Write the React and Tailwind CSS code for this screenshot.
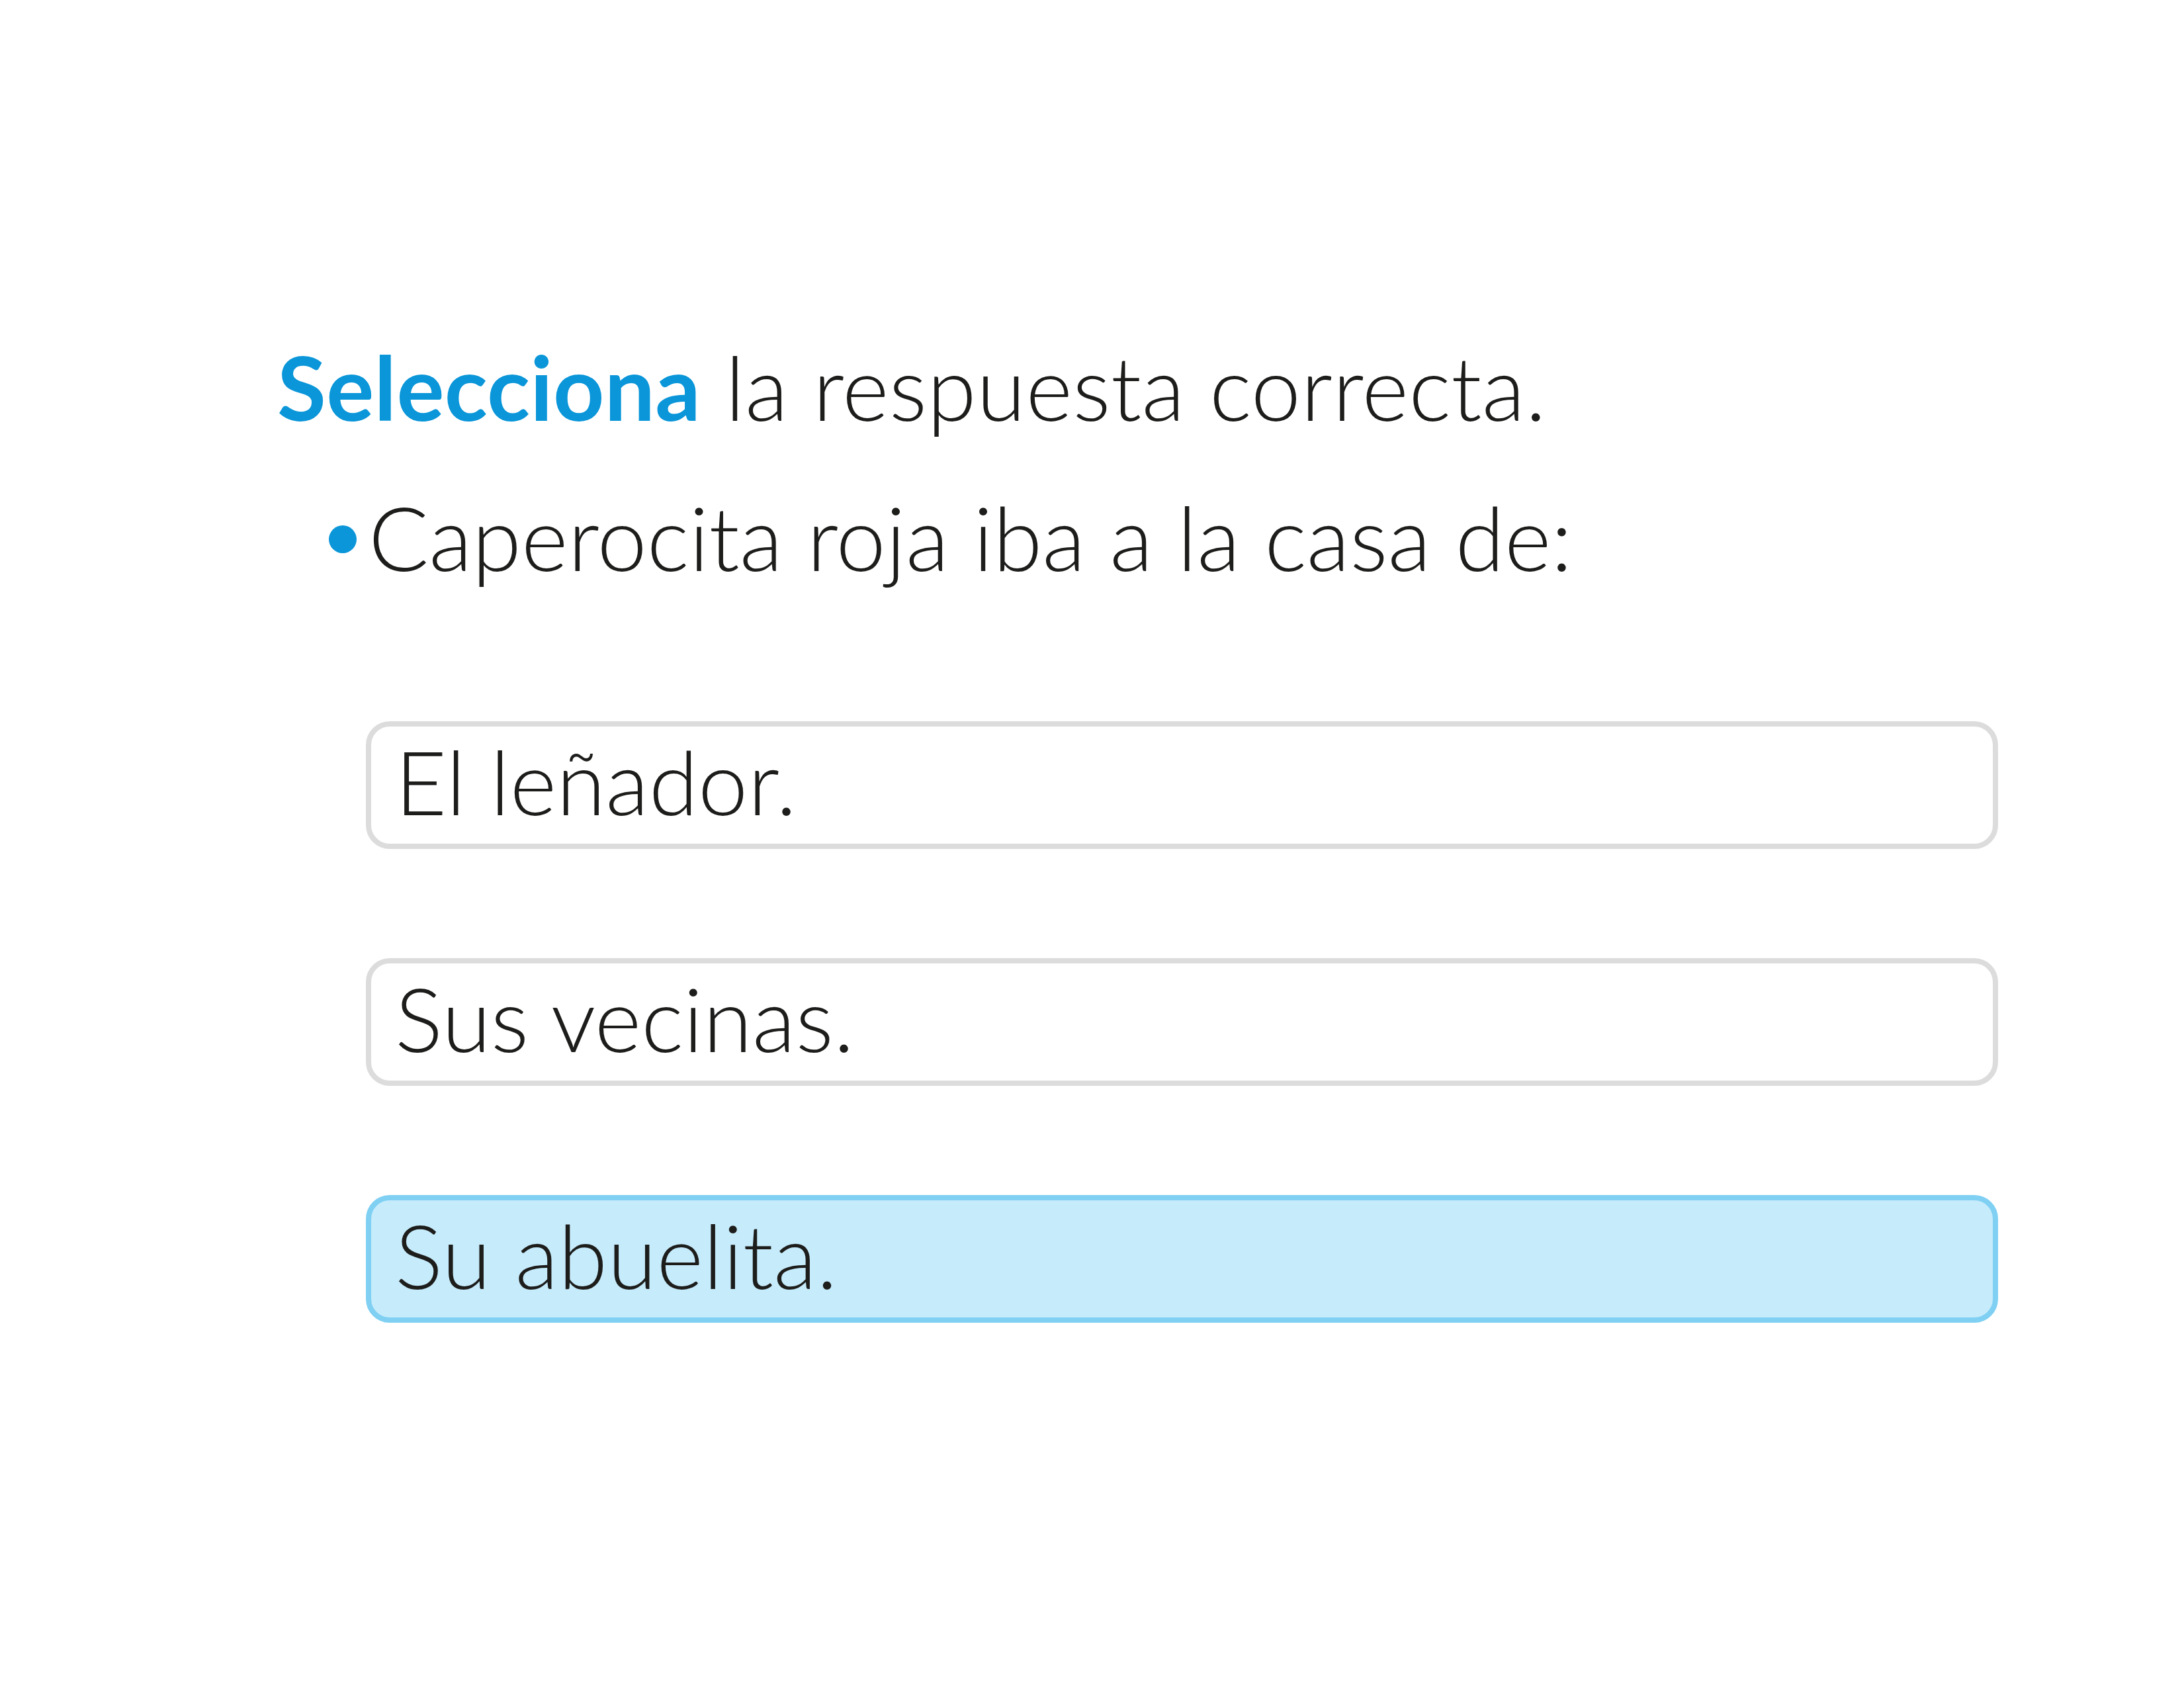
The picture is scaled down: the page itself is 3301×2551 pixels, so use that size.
import React from 'react';

const options = [
    { label: 'El leñador.', selected: false },
    { label: 'Sus vecinas.', selected: false },
    { label: 'Su abuelita.', selected: true },
];

const App = () => {
    return (
        <div className="w-[3301px] h-[2551px] bg-white text-[#1d1d1b] font-['Lato','Liberation_Sans',sans-serif] overflow-hidden">
            <div className="pl-[419px] pt-[503px]">
                {/* Instruction */}
                <h1 className="text-[135px] leading-[162px] font-light tracking-[0.3px]">
                    <span className="font-bold text-[#0a96d9]">Selecciona</span> la respuesta correcta.
                </h1>

                {/* Question */}
                <div className="flex mt-[65px] ml-[78px]">
                    <span className="w-[42px] h-[42px] mt-[64px] rounded-full bg-[#0a96d9] shrink-0"></span>
                    <p className="ml-[18px] text-[135px] leading-[162px] font-light">
                        Caperocita roja iba a la casa de:
                    </p>
                </div>

                {/* Answers */}
                <div className="flex flex-col gap-[165px] mt-[198px] ml-[134px] w-[2467px]">
                    {options.map((opt) => (
                        <div
                            key={opt.label}
                            className={
                                opt.selected
                                    ? 'h-[193px] border-[8px] border-[#7fd0f3] bg-[#c6ebfb] rounded-[36px] pl-[36px] pt-[1px]'
                                    : 'h-[193px] border-[8px] border-[#dcdcdc] bg-white rounded-[36px] pl-[36px] pt-[1px]'
                            }
                        >
                            <span className="block text-[135px] leading-[162px] font-light">{opt.label}</span>
                        </div>
                    ))}
                </div>
            </div>
        </div>
    );
};

export default App;
